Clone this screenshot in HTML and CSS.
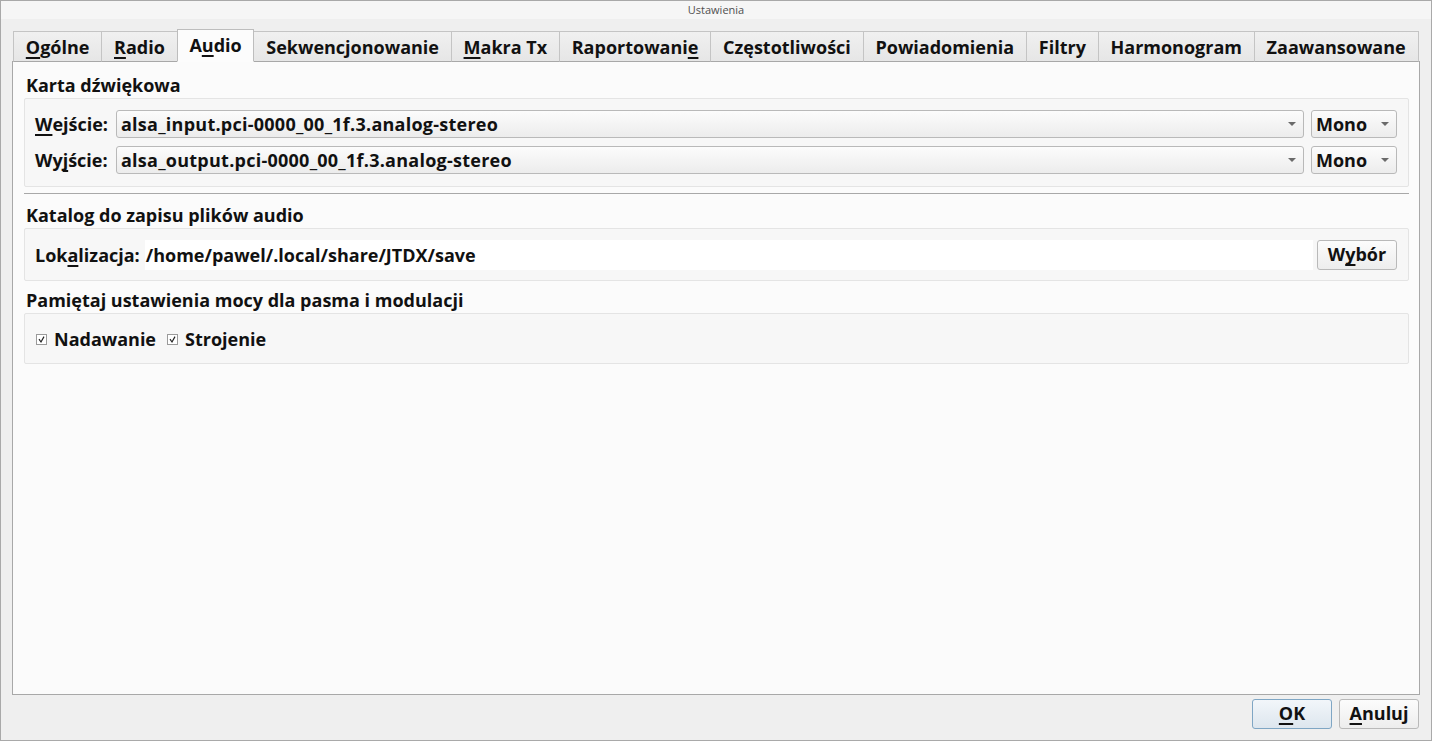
FILE: index.html
```html
<!DOCTYPE html>
<html lang="pl">
<head>
<meta charset="utf-8">
<title>Ustawienia</title>
<link rel="stylesheet" href="styles.css">
</head>
<body>
<div class="window">
  <div class="titlebar">Ustawienia</div>
  <div class="content">
    <div class="tabbar">
      <div class="tab"><u>O</u>gólne</div>
      <div class="tab"><u>R</u>adio</div>
      <div class="tab active">A<u>u</u>dio</div>
      <div class="tab">Sekwencjonowanie</div>
      <div class="tab"><u>M</u>akra Tx</div>
      <div class="tab">Raportowani<u>e</u></div>
      <div class="tab">Częstotliwości</div>
      <div class="tab">Powiadomienia</div>
      <div class="tab">Filtry</div>
      <div class="tab">Harmonogram</div>
      <div class="tab">Zaawansowane</div>
    </div>
    <div class="pane">
      <div class="section-title">Karta dźwiękowa</div>
      <div class="group group-sound">
        <div class="row">
          <span class="label"><u>W</u>ejście:</span>
          <div class="combo combo-wide"><span class="value">alsa_input.pci-0000_00_1f.3.analog-stereo</span><i class="arrow"></i></div>
          <div class="combo combo-mono"><span>Mono</span><i class="arrow"></i></div>
        </div>
        <div class="row">
          <span class="label">Wy<u>j</u>ście:</span>
          <div class="combo combo-wide"><span class="value">alsa_output.pci-0000_00_1f.3.analog-stereo</span><i class="arrow"></i></div>
          <div class="combo combo-mono"><span>Mono</span><i class="arrow"></i></div>
        </div>
      </div>
      <div class="separator"></div>
      <div class="section-title">Katalog do zapisu plików audio</div>
      <div class="group group-dir">
        <span class="label">Lok<u>a</u>lizacja:</span>
        <div class="path">/home/pawel/.local/share/JTDX/save</div>
        <div class="button">W<u>y</u>bór</div>
      </div>
      <div class="section-title">Pamiętaj ustawienia mocy dla pasma i modulacji</div>
      <div class="group group-check">
        <label class="check"><svg class="box" width="11" height="11" viewBox="0 0 11 11"><rect x="0.5" y="0.5" width="10" height="10" fill="#fff" stroke="#9a9a9a"/><path d="M3 5.2 L5 8 L8 2.6" fill="none" stroke="#222" stroke-width="1.2"/></svg>Nadawanie</label>
        <label class="check"><svg class="box" width="11" height="11" viewBox="0 0 11 11"><rect x="0.5" y="0.5" width="10" height="10" fill="#fff" stroke="#9a9a9a"/><path d="M3 5.2 L5 8 L8 2.6" fill="none" stroke="#222" stroke-width="1.2"/></svg>Strojenie</label>
      </div>
    </div>
    <div class="footer">
      <div class="button btn-ok"><u>O</u>K</div>
      <div class="button btn-cancel"><u>A</u>nuluj</div>
    </div>
  </div>
</div>
</body>
</html>
```

FILE: styles.css
```css
* { box-sizing: border-box; }
html, body { margin: 0; padding: 0; }
body {
  width: 1432px;
  height: 741px;
  overflow: hidden;
  font-family: "Open Sans", "DejaVu Sans", sans-serif;
  font-weight: 700;
  font-size: 18px;
  color: #111111;
}
u {
  text-decoration: underline;
  text-decoration-thickness: 2px;
  text-underline-offset: 3px;
  text-decoration-skip-ink: none;
}
.window {
  width: 1432px;
  height: 741px;
  background: #efefef;
  border: 1px solid #a9a9a9;
  display: flex;
  flex-direction: column;
}
.titlebar {
  height: 18px;
  background: #f6f6f6;
  font-size: 11px;
  font-weight: 400;
  color: #505050;
  text-align: center;
  line-height: 17px;
}
.content {
  flex: 1;
  padding: 10px 11px 0 11px;
  display: flex;
  flex-direction: column;
}
.tabbar {
  display: flex;
  align-items: flex-end;
  height: 33px;
  padding-left: 1px;
  position: relative;
  z-index: 1;
  margin-bottom: -1px;
}
.tab {
  height: 31px;
  padding: 0 11.8px;
  line-height: 30px;
  background: linear-gradient(#f0f0f0, #e6e6e6);
  border: 1px solid #c4c4c4;
  border-bottom-color: #a8a8a8;
  border-right: none;
  white-space: nowrap;
}
.tab:last-child { border-right: 1px solid #c4c4c4; }
.tab.active {
  height: 33px;
  line-height: 31px;
  background: #fcfcfc;
  border-color: #bdbdbd;
  border-bottom-color: #fcfcfc;
  border-right: 1px solid #bdbdbd;
  margin-right: -1px;
  position: relative;
}
.pane {
  height: 634px;
  background: #fbfbfb;
  border: 1px solid #a8a8a8;
  padding: 11px 10px 0 11px;
  display: flex;
  flex-direction: column;
}
.section-title {
  line-height: 24px;
  margin-left: 2px;
  height: 25px;
}
.group {
  background: #f7f7f7;
  border: 1px solid #e4e4e4;
  border-radius: 2px;
}
.group-sound {
  height: 89px;
  padding: 11px 11px 0 10px;
  display: flex;
  flex-direction: column;
  gap: 8px;
}
.row {
  display: flex;
  align-items: center;
  height: 28px;
}
.label { white-space: nowrap; }
.row .label { width: 81px; }
.combo {
  height: 28px;
  border: 1px solid #b9b9b9;
  border-radius: 3px;
  background: linear-gradient(#fcfcfc, #ececec);
  display: flex;
  align-items: center;
  justify-content: space-between;
  padding: 0 7px 0 4px;
}
.combo .value { letter-spacing: 0.25px; }
.combo-wide { flex: 1; }
.combo-mono { width: 86px; margin-left: 7px; }
.arrow {
  width: 0;
  height: 0;
  border-left: 4px solid transparent;
  border-right: 4px solid transparent;
  border-top: 4px solid #6a6a6a;
}
.separator {
  height: 1px;
  background: #a8a8a8;
  margin: 6px 0 9px 0;
}
.group-dir {
  height: 53px;
  display: flex;
  align-items: center;
  padding: 0 11px 0 10px;
}
.group-dir .label { margin-right: 5px; }
.path {
  flex: 1;
  height: 30px;
  background: #ffffff;
  line-height: 30px;
  padding-left: 1px;
}
.button {
  height: 30px;
  border: 1px solid #b9b9b9;
  border-radius: 3px;
  background: linear-gradient(#fcfcfc, #ededed);
  line-height: 27px;
  text-align: center;
  white-space: nowrap;
}
.group-dir .button { width: 80px; margin-left: 4px; }
.group-dir + .section-title { margin-top: 7px; }
.group-check {
  height: 51px;
  display: flex;
  align-items: center;
  padding-left: 11px;
  gap: 11px;
}
.check {
  display: flex;
  align-items: center;
  gap: 7px;
}
.box { display: block; margin-top: 1px; }
.footer {
  display: flex;
  justify-content: flex-end;
  gap: 7px;
  padding-top: 4px;
  padding-right: 1px;
}
.footer .button { width: 80px; }
.btn-ok {
  border-color: #7fa6c4;
  background: linear-gradient(#f2f6fa, #dde6ee);
}
```
